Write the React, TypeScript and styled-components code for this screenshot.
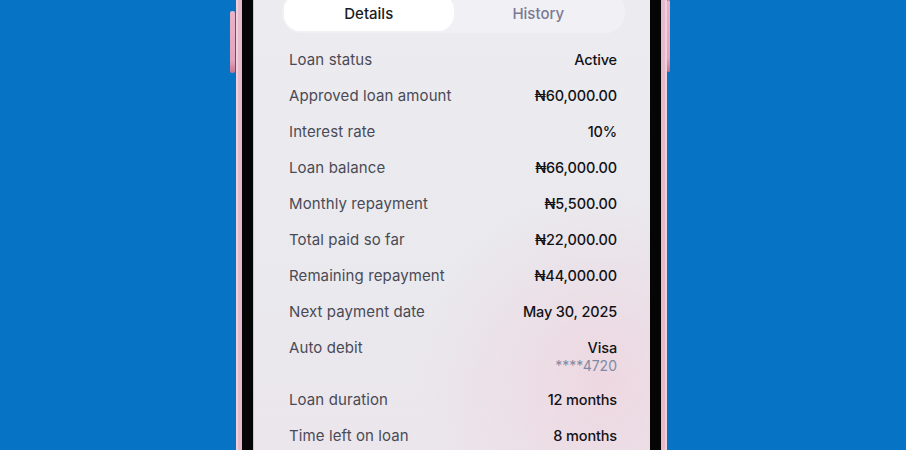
import React from "react";
import styled, { createGlobalStyle } from "styled-components";

const Global = createGlobalStyle`
  html, body { margin: 0; padding: 0; }
  body { background: #0773c4; font-family: "Inter", "Noto Sans", sans-serif; }
`;

const Stage = styled.div`
  width: 906px;
  height: 450px;
  overflow: hidden;
  display: flex;
  align-items: flex-start;
  padding-left: 230px;
  box-sizing: border-box;
`;

const SideButton = styled.div<{ $top: number; $h: number; $w: number }>`
  flex: none;
  width: ${(p) => p.$w}px;
  height: ${(p) => p.$h}px;
  margin-top: ${(p) => p.$top}px;
  background: linear-gradient(180deg, #e9b3c8 0%, #e2a4bc 80%, #c9738f 100%);
  border-radius: 2px;
`;

const Frame = styled.div`
  flex: none;
  margin-left: 1px;
  height: 450px;
  display: flex;
  background: #e6bccc;
  padding: 0 6px;
  box-shadow: inset 2px 0 0 #efd0dc, inset -2px 0 0 #efd0dc;
`;

const Bezel = styled.div`
  display: flex;
  background: #050506;
  padding: 0 11px;
`;

const Screen = styled.div`
  width: 397px;
  height: 450px;
  box-sizing: border-box;
  border-left: 1px solid #c9c8ce;
  background:
    radial-gradient(ellipse 260px 280px at 88% 85%, rgba(238, 214, 224, 0.9), rgba(238, 214, 224, 0) 70%),
    linear-gradient(180deg, #ececf0 0%, #e9e9ee 60%, #ebe6ec 100%);
  display: flex;
  flex-direction: column;
  padding: 0 25px 0 28px;
`;

const Tabs = styled.div`
  flex: none;
  margin-top: -8px;
  height: 41px;
  box-sizing: border-box;
  display: flex;
  padding: 2px;
  border-radius: 20px;
  background: #f1f1f5;
`;

const Tab = styled.div<{ $active?: boolean }>`
  flex: 1;
  display: flex;
  align-items: center;
  justify-content: center;
  padding-top: 1px;
  border-radius: 16px;
  font-size: 15px;
  font-weight: 500;
  color: ${(p) => (p.$active ? "#1b1b1f" : "#7b7a93")};
  background: ${(p) => (p.$active ? "#ffffff" : "transparent")};
`;

const List = styled.div`
  flex: none;
  margin-top: 9px;
  display: flex;
  flex-direction: column;
  padding: 0 8px 0 7px;
`;

const Row = styled.div`
  display: flex;
  justify-content: space-between;
  align-items: flex-start;
  padding: 8px 0;
`;

const Label = styled.span`
  font-size: 15px;
  line-height: 20px;
  color: #4a4a55;
  letter-spacing: 0.1px;
`;

const ValueCol = styled.div`
  display: flex;
  flex-direction: column;
  align-items: flex-end;
`;

const Value = styled.span`
  font-size: 14.5px;
  line-height: 20px;
  font-weight: 500;
  letter-spacing: -0.15px;
  color: #121216;
`;

const Sub = styled.span`
  font-size: 14px;
  line-height: 16px;
  color: #7f8aa2;
`;

const rows: { label: string; value: string; sub?: string }[] = [
  { label: "Loan status", value: "Active" },
  { label: "Approved loan amount", value: "₦60,000.00" },
  { label: "Interest rate", value: "10%" },
  { label: "Loan balance", value: "₦66,000.00" },
  { label: "Monthly repayment", value: "₦5,500.00" },
  { label: "Total paid so far", value: "₦22,000.00" },
  { label: "Remaining repayment", value: "₦44,000.00" },
  { label: "Next payment date", value: "May 30, 2025" },
  { label: "Auto debit", value: "Visa", sub: "****4720" },
  { label: "Loan duration", value: "12 months" },
  { label: "Time left on loan", value: "8 months" },
];

export default function App() {
  return (
    <>
      <Global />
      <Stage>
        <SideButton $top={11} $h={62} $w={5} />
        <Frame>
          <Bezel>
            <Screen>
              <Tabs>
                <Tab $active>Details</Tab>
                <Tab>History</Tab>
              </Tabs>
              <List>
                {rows.map((r) => (
                  <Row key={r.label}>
                    <Label>{r.label}</Label>
                    <ValueCol>
                      <Value>{r.value}</Value>
                      {r.sub && <Sub>{r.sub}</Sub>}
                    </ValueCol>
                  </Row>
                ))}
              </List>
            </Screen>
          </Bezel>
        </Frame>
        <SideButton $top={0} $h={72} $w={3} />
      </Stage>
    </>
  );
}
